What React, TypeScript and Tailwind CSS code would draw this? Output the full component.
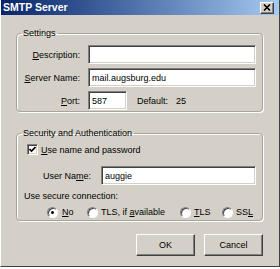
import React from 'react'

const sunken =
  'border border-t-[#808080] border-l-[#808080] border-b-white border-r-white shadow-[inset_1px_1px_0_#404040,inset_-1px_-1px_0_#d4d0c8]'
const raised =
  'border border-t-white border-l-white border-b-[#404040] border-r-[#404040] shadow-[inset_-1px_-1px_0_#808080]'

function U({ children }: { children: React.ReactNode }) {
  return <span className="underline underline-offset-[1px]">{children}</span>
}

function Radio({ checked }: { checked?: boolean }) {
  return (
    <span className="flex h-[11px] w-[11px] shrink-0 items-center justify-center rounded-full border border-t-[#808080] border-l-[#808080] border-b-white border-r-white bg-white shadow-[inset_1px_1px_0_#404040]">
      {checked && <span className="h-[3px] w-[3px] rounded-full bg-black" />}
    </span>
  )
}

function Field({ label, value, width }: { label: React.ReactNode; value?: string; width?: string }) {
  return (
    <div className="flex h-[19px] items-center">
      <label className="w-[63px] text-right">{label}</label>
      <div className={`ml-[8px] flex h-[19px] items-center bg-white px-[3px] ${sunken} ${width ?? 'flex-1'}`}>{value}</div>
    </div>
  )
}

export default function App() {
  return (
    <div
      className="h-[269px] w-[280px] bg-white text-[9px] leading-[12px] text-black"
      style={{ fontFamily: '"Liberation Sans", Arial, sans-serif' }}
    >
      <div className="flex h-[267px] flex-col border-b border-r border-b-[#404040] border-r-[#404040] border-l border-l-white bg-[#d4d0c8]">
        {/* Title bar */}
        <div className="flex h-[15px] shrink-0 items-center justify-between bg-gradient-to-r from-[#0a246a] to-[#a6caf0] pl-[2px] pr-[5px]">
          <span className="text-[10.5px] font-bold leading-[15px] text-white">SMTP Server</span>
          <span className={`flex h-[12px] w-[14px] items-center justify-center bg-[#d4d0c8] ${raised}`}>
            <svg width="8" height="7" viewBox="0 0 8 7">
              <path d="M1 0.5 L7 6.5 M7 0.5 L1 6.5" stroke="black" strokeWidth="1.6" />
            </svg>
          </span>
        </div>

        <div className="flex flex-col pl-[15px] pr-[16px]">
          {/* Settings group */}
          <fieldset className="mt-[12px] flex flex-col gap-[4px] rounded-[4px] border border-[#a8a49c] pb-[1px] pr-[6px] pt-[6px] shadow-[1px_1px_0_white,inset_1px_1px_0_white]">
            <legend className="ml-[4px] px-[2px]">Settings</legend>
            <Field label={<><U>D</U>escription:</>} />
            <Field label={<><U>S</U>erver Name:</>} value="mail.augsburg.edu" />
            <div className="flex h-[19px] items-center">
              <label className="w-[63px] text-right"><U>P</U>ort:</label>
              <div className={`ml-[8px] flex h-[19px] w-[39px] items-center bg-white px-[3px] ${sunken}`}>587</div>
              <span className="ml-[10px]">Default:</span>
              <span className="ml-[8px]">25</span>
            </div>
          </fieldset>

          {/* Security group */}
          <fieldset className="mt-[15px] flex flex-col rounded-[4px] border border-[#a8a49c] pb-[2px] pr-[6px] pt-[4px] shadow-[1px_1px_0_white,inset_1px_1px_0_white]">
            <legend className="ml-[4px] px-[2px]">Security and Authentication</legend>
            <div className="flex h-[13px] items-center pl-[10px]">
              <span className={`flex h-[11px] w-[11px] items-center justify-center bg-white ${sunken}`}>
                <svg width="7" height="7" viewBox="0 0 7 7">
                  <path d="M0.5 3 L2.5 5 L6.5 1" stroke="black" strokeWidth="1.6" fill="none" />
                </svg>
              </span>
              <span className="ml-[3px]"><U>U</U>se name and password</span>
            </div>
            <div className="mt-[10px] flex h-[19px] items-center pl-[26px]">
              <label>User Na<U>m</U>e:</label>
              <div className={`ml-[10px] flex h-[19px] flex-1 items-center bg-white px-[3px] ${sunken}`}>auggie</div>
            </div>
            <div className="mt-[5px] pl-[7px]">Use secure connection:</div>
            <div className="mt-[4px] flex h-[12px] items-center pl-[30px]">
              <span className="flex w-[40px] items-center gap-[4px]"><Radio checked /><span><U>N</U>o</span></span>
              <span className="flex w-[93px] items-center gap-[3px]"><Radio /><span>TLS, if <U>a</U>vailable</span></span>
              <span className="flex w-[42px] items-center gap-[3px]"><Radio /><span><U>T</U>LS</span></span>
              <span className="flex items-center gap-[3px]"><Radio /><span>SS<U>L</U></span></span>
            </div>
          </fieldset>

          {/* Buttons */}
          <div className="mt-[13px] flex justify-end gap-[9px]">
            <button className={`h-[22px] w-[59px] bg-[#d4d0c8] ${raised}`}>OK</button>
            <button className={`h-[22px] w-[59px] bg-[#d4d0c8] ${raised}`}>Cancel</button>
          </div>
        </div>
      </div>
    </div>
  )
}
